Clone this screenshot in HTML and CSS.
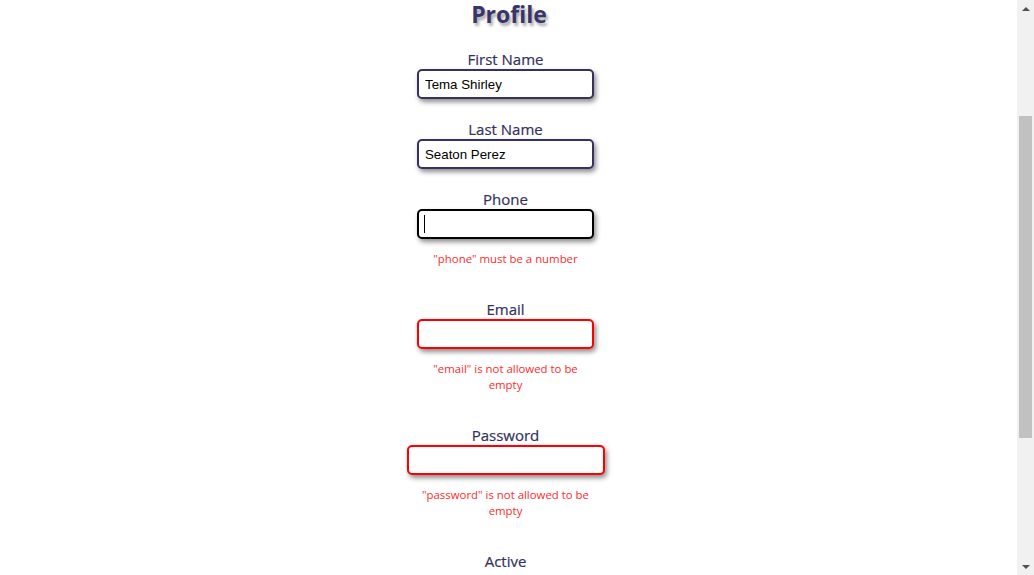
FILE: index.html
```html
<!DOCTYPE html>
<html lang="en">
<head>
<meta charset="utf-8">
<title>Profile</title>
<link rel="stylesheet" href="styles.css">
</head>
<body>
<div class="page">
  <main class="main">
    <h1 class="title">Profile</h1>
    <form class="form">
      <div class="field">
        <label class="label">First Name</label>
        <input class="input" type="text" value="Tema Shirley">
      </div>
      <div class="field">
        <label class="label">Last Name</label>
        <input class="input" type="text" value="Seaton Perez">
      </div>
      <div class="field">
        <label class="label">Phone</label>
        <div class="input-wrap">
          <input class="input input-focus" type="text" value="">
          <span class="caret"></span>
        </div>
        <p class="error">"phone" must be a number</p>
      </div>
      <div class="field">
        <label class="label">Email</label>
        <input class="input input-error" type="text" value="">
        <p class="error">"email" is not allowed to be empty</p>
      </div>
      <div class="field field-wide">
        <label class="label">Password</label>
        <input class="input input-error" type="password" value="">
        <p class="error">"password" is not allowed to be empty</p>
      </div>
      <div class="field">
        <label class="label">Active</label>
      </div>
    </form>
  </main>
  <div class="scrollbar">
    <div class="sb-btn"><span class="arrow-up"></span></div>
    <div class="sb-track">
      <div class="sb-thumb"></div>
    </div>
    <div class="sb-btn"><span class="arrow-down"></span></div>
  </div>
</div>
</body>
</html>
```
FILE: styles.css
```css
html, body {
  margin: 0;
  padding: 0;
  background: #fff;
}
.page {
  display: flex;
  width: 1034px;
  height: 575px;
  overflow: hidden;
}
.main {
  flex: 1;
  overflow: hidden;
  font-family: "Open Sans", "Noto Sans", sans-serif;
}
.title {
  margin: 0;
  padding-top: 1px;
  padding-left: 1px;
  text-align: center;
  font-size: 23px;
  line-height: 27px;
  font-weight: 700;
  color: #38356a;
  text-shadow: 2px 3px 3px rgba(0, 0, 0, 0.35);
}
.form {
  display: flex;
  flex-direction: column;
  align-items: center;
  padding-top: 21px;
  padding-right: 6px;
}
.field {
  display: flex;
  flex-direction: column;
  align-items: center;
  width: 177px;
  margin-bottom: 20px;
}
.field-wide {
  width: 198px;
}
.label {
  display: block;
  font-size: 15px;
  line-height: 20px;
  height: 20px;
  color: #33315e;
  text-align: center;
  -webkit-text-stroke: 0.2px #33315e;
}
.input-wrap {
  position: relative;
  width: 100%;
}
.input {
  box-sizing: border-box;
  width: 100%;
  height: 30px;
  margin: 0;
  padding: 0 6px;
  border: 2px solid #35325f;
  border-radius: 5px;
  background: #fff;
  box-shadow: 2px 3px 5px rgba(0, 0, 0, 0.45);
  font-family: "Liberation Sans", Arial, sans-serif;
  font-size: 13.3px;
  color: #000;
  outline: none;
}
.input-focus {
  border-color: #000;
}
.input-error {
  border-color: #f00;
}
.caret {
  position: absolute;
  left: 7px;
  top: 6px;
  width: 1px;
  height: 18px;
  background: #000;
}
.error {
  margin: 12px 0;
  font-size: 11.4px;
  line-height: 16px;
  color: #ff2a2a;
  text-align: center;
}
.scrollbar {
  width: 17px;
  height: 575px;
  background: #f1f1f1;
  display: flex;
  flex-direction: column;
}
.sb-btn {
  height: 17px;
  display: flex;
  align-items: center;
  justify-content: center;
}
.arrow-up {
  width: 0;
  height: 0;
  border-left: 4px solid transparent;
  border-right: 4px solid transparent;
  border-bottom: 4px solid #505050;
}
.arrow-down {
  width: 0;
  height: 0;
  border-left: 4px solid transparent;
  border-right: 4px solid transparent;
  border-top: 4px solid #505050;
}
.sb-track {
  flex: 1;
  padding: 99px 2px 0 2px;
}
.sb-thumb {
  height: 322px;
  background: #c1c1c1;
}
```
